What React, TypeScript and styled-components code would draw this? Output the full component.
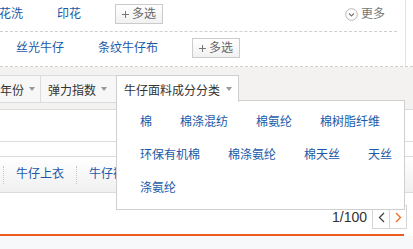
import styled, { createGlobalStyle } from 'styled-components'

const GlobalStyle = createGlobalStyle`
  html, body {
    margin: 0;
    padding: 0;
    background: #fff;
  }
  body {
    font-family: "Liberation Sans", "Noto Sans CJK SC", sans-serif;
    font-size: 12px;
    color: #333;
  }
`

const Page = styled.div`
  width: 413px;
  height: 249px;
  overflow: hidden;
  display: flex;
  flex-direction: column;
`

const FilterBox = styled.div`
  width: 405px;
  border-right: 1px solid #e3e3e3;
`

const AttrRow = styled.div<{ $first?: boolean }>`
  display: flex;
  align-items: center;
  height: 20px;
  padding: ${(p) => (p.$first ? '4px 0 7px 0' : '6px 0 8px 16px')};
  margin-right: ${(p) => (p.$first ? '8px' : '-8px')};
  border-bottom: 1px dashed #cfcfcf;
`

const AttrLink = styled.a<{ $offset?: number }>`
  color: #1a5aa8;
  line-height: 20px;
  margin-right: 34px;
  margin-left: ${(p) => p.$offset ?? 0}px;
  white-space: nowrap;
  cursor: pointer;
`

const MultiButton = styled.button`
  display: flex;
  align-items: center;
  gap: 3px;
  height: 20px;
  padding: 0 6px;
  border: 1px solid #cbcbcb;
  background: linear-gradient(#ffffff, #f1f1f1);
  color: #666;
  font-family: inherit;
  font-size: 12px;
  line-height: 18px;
`

const Plus = styled.span`
  position: relative;
  width: 7px;
  height: 7px;
  &::before,
  &::after {
    content: '';
    position: absolute;
    background: #777;
  }
  &::before {
    left: 0;
    top: 3px;
    width: 7px;
    height: 1px;
  }
  &::after {
    left: 3px;
    top: 0;
    width: 1px;
    height: 7px;
  }
`

const More = styled.span`
  display: flex;
  align-items: center;
  gap: 3px;
  margin-left: auto;
  margin-right: 12px;
  color: #777;
  line-height: 20px;
`

const SortBar = styled.div`
  position: relative;
  background: #f4f1f1;
  padding: 8px 0 6px;
  border-bottom: 1px solid #dcdcdc;
`

const SortRow = styled.div`
  display: flex;
  height: 26px;
  width: 116px;
  border-top: 1px solid #dcdcdc;
  border-bottom: 1px solid #dcdcdc;
  background: #f7f7f7;
`

const SortItem = styled.div<{ $pad: string; $line?: boolean }>`
  display: flex;
  align-items: center;
  gap: 5px;
  padding: ${(p) => p.$pad};
  border-right: ${(p) => (p.$line ? '1px solid #dcdcdc' : 'none')};
  color: #333;
  white-space: nowrap;
`

const Caret = styled.span`
  width: 0;
  height: 0;
  border-left: 3.5px solid transparent;
  border-right: 3.5px solid transparent;
  border-top: 4px solid #999;
`

const SortTab = styled.div`
  position: absolute;
  left: 116px;
  top: 8px;
  z-index: 2;
  display: flex;
  align-items: center;
  gap: 6px;
  height: 26px;
  padding: 0 6px 0 7px;
  background: #fff;
  border: 1px solid #cfcfcf;
  border-bottom: none;
  color: #333;
  white-space: nowrap;
`

const Dropdown = styled.div`
  position: absolute;
  left: 116px;
  top: 33px;
  z-index: 1;
  width: 264px;
  padding: 5px 0 4px 23px;
  display: flex;
  flex-wrap: wrap;
  column-gap: 28px;
  background: #fff;
  border: 1px solid #cfcfcf;
`

const Option = styled.a`
  color: #1a5aa8;
  line-height: 33px;
  white-space: nowrap;
  cursor: pointer;
`

const SearchArea = styled.div`
  height: 31px;
  border-bottom: 1px solid #dcdcdc;
  margin-bottom: 14px;
`

const CatTabs = styled.div`
  display: flex;
  align-items: center;
  height: 35px;
  padding-left: 3px;
  border-top: 1px solid #dcdcdc;
  border-bottom: 1px solid #dcdcdc;
  background: linear-gradient(#ffffff, #f0f0f0);
`

const CatTab = styled.a`
  position: relative;
  padding: 0 12px 0 13px;
  color: #1a5aa8;
  white-space: nowrap;
  line-height: 35px;
  &::before {
    content: '';
    position: absolute;
    left: 0;
    top: 9px;
    height: 18px;
    border-left: 1px dotted #c8c8c8;
  }
`

const Pager = styled.div`
  display: flex;
  justify-content: flex-end;
  align-items: center;
  gap: 5px;
  padding: 12px 6px 5px 0;
`

const PageText = styled.span`
  font-size: 14px;
  color: #333;
  line-height: 24px;
`

const PageButtons = styled.div`
  display: flex;
  border: 1px solid #d6d6d6;
  height: 22px;
`

const PageButton = styled.span<{ $split?: boolean }>`
  width: 16px;
  display: flex;
  align-items: center;
  justify-content: center;
  border-left: ${(p) => (p.$split ? '1px solid #d6d6d6' : 'none')};
`

const OrangeLine = styled.div`
  height: 2px;
  margin-right: 9px;
  background: #ef5a1f;
`

const Footer = styled.div`
  flex: 1;
  background: #f6f8fa;
`

function MoreIcon() {
  return (
    <svg width="13" height="13" viewBox="0 0 13 13">
      <circle cx="6.5" cy="6.5" r="5.8" fill="#fff" stroke="#b5b5b5" />
      <path d="M4 5.5 L6.5 8 L9 5.5" fill="none" stroke="#777" strokeWidth="1.2" />
    </svg>
  )
}

function Chevron({ dir, color }: { dir: 'left' | 'right'; color: string }) {
  return (
    <svg width="7" height="11" viewBox="0 0 7 11">
      <path
        d={dir === 'left' ? 'M6 1 L1.5 5.5 L6 10' : 'M1 1 L5.5 5.5 L1 10'}
        fill="none"
        stroke={color}
        strokeWidth="1.3"
      />
    </svg>
  )
}

const fabrics = ['棉', '棉涤混纺', '棉氨纶', '棉树脂纤维', '环保有机棉', '棉涤氨纶', '棉天丝', '天丝', '涤氨纶']

export default function App() {
  return (
    <Page>
      <GlobalStyle />
      <FilterBox>
        <AttrRow $first>
          <AttrLink $offset={-1}>花洗</AttrLink>
          <AttrLink>印花</AttrLink>
          <MultiButton>
            <Plus />
            多选
          </MultiButton>
          <More>
            <MoreIcon />
            更多
          </More>
        </AttrRow>
        <AttrRow>
          <AttrLink>丝光牛仔</AttrLink>
          <AttrLink>条纹牛仔布</AttrLink>
          <MultiButton>
            <Plus />
            多选
          </MultiButton>
        </AttrRow>
      </FilterBox>
      <SortBar>
        <SortRow>
          <SortItem $pad="0 5px 0 0" $line>
            年份 <Caret />
          </SortItem>
          <SortItem $pad="0 7px 0 7px">
            弹力指数 <Caret />
          </SortItem>
        </SortRow>
        <SortTab>
          牛仔面料成分分类 <Caret />
        </SortTab>
        <Dropdown>
          {fabrics.map((f) => (
            <Option key={f}>{f}</Option>
          ))}
        </Dropdown>
      </SortBar>
      <SearchArea />
      <CatTabs>
        <CatTab>牛仔上衣</CatTab>
        <CatTab>牛仔裤</CatTab>
        <CatTab>牛仔短裤</CatTab>
      </CatTabs>
      <Pager>
        <PageText>1/100</PageText>
        <PageButtons>
          <PageButton>
            <Chevron dir="left" color="#444" />
          </PageButton>
          <PageButton $split>
            <Chevron dir="right" color="#f26a1b" />
          </PageButton>
        </PageButtons>
      </Pager>
      <OrangeLine />
      <Footer />
    </Page>
  )
}
